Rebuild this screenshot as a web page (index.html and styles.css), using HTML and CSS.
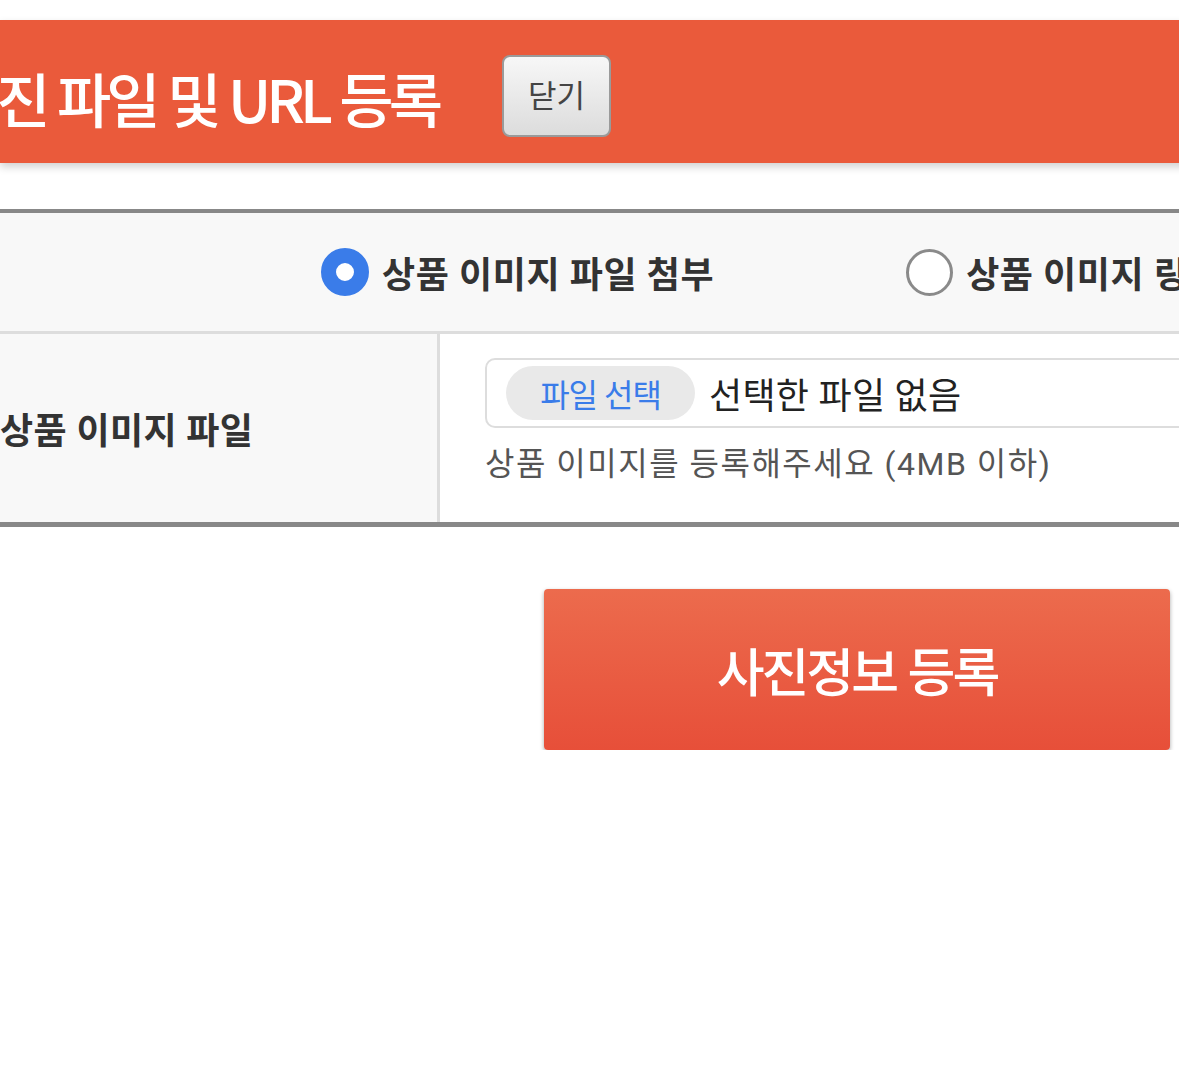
FILE: index.html
```html
<!DOCTYPE html>
<html lang="ko">
<head>
<meta charset="utf-8">
<title>사진 파일 및 URL 등록</title>
<link rel="stylesheet" href="styles.css">
</head>
<body>
<div class="page">
  <header class="topbar">
    <h1 class="title">사진 파일 및 URL 등록</h1>
    <button class="close-btn" type="button">닫기</button>
  </header>
  <section class="form-table">
    <div class="radio-row">
      <label class="radio-opt"><span class="radio checked"></span><span class="radio-text">상품 이미지 파일 첨부</span></label>
      <label class="radio-opt"><span class="radio"></span><span class="radio-text">상품 이미지 링크 등록</span></label>
    </div>
    <div class="file-row">
      <div class="file-label">상품 이미지 파일</div>
      <div class="file-cell">
        <div class="file-box"><span class="file-btn">파일 선택</span><span class="file-name">선택한 파일 없음</span></div>
        <p class="hint">상품 이미지를 등록해주세요 (4MB 이하)</p>
      </div>
    </div>
  </section>
  <div class="actions"><button class="submit" type="button">사진정보 등록</button></div>
</div>
</body>
</html>
```

FILE: styles.css
```css
html, body {
  margin: 0;
  padding: 0;
  background: #ffffff;
  overflow: hidden;
}
body {
  font-family: Roboto, "Noto Sans CJK KR", sans-serif;
  color: #333;
}
.page {
  width: 1400px;
}
.topbar {
  margin-top: 20px;
  height: 143px;
  background: #ea5a3b;
  display: flex;
  align-items: flex-start;
  box-shadow: 0 4px 8px rgba(0, 0, 0, 0.18);
}
.title {
  margin: 40px 0 0 -53px;
  font-family: "Noto Sans CJK KR", sans-serif;
  font-size: 59px;
  line-height: 1.3;
  font-weight: 500;
  color: #ffffff;
  letter-spacing: -5px;
  white-space: nowrap;
}
.close-btn {
  margin: 35px 0 0 64px;
  width: 109px;
  height: 82px;
  font-family: "Noto Sans CJK KR", sans-serif;
  font-size: 31px;
  color: #444;
  background: linear-gradient(#f7f7f7, #dcdcdc);
  border: 2px solid #9a9a9a;
  border-radius: 8px;
  padding: 0 0 6px;
}
.form-table {
  margin-top: 46px;
  border-top: 4px solid #888888;
  border-bottom: 5px solid #888888;
}
.radio-row {
  height: 118px;
  background: #f8f8f8;
  border-bottom: 3px solid #dddddd;
  display: flex;
  align-items: center;
  padding-left: 321px;
  gap: 192px;
}
.radio-opt {
  display: flex;
  align-items: center;
  gap: 13px;
  white-space: nowrap;
}
.radio {
  width: 41px;
  height: 41px;
  border-radius: 50%;
  border: 3px solid #8a8a8a;
  background: #ffffff;
}
.radio.checked {
  width: 18px;
  height: 18px;
  border: 15px solid #3a7ce9;
}
.radio-text {
  font-size: 36px;
  font-weight: 700;
  color: #333;
  letter-spacing: 0.6px;
}
.file-row {
  display: flex;
  height: 188px;
}
.file-label {
  width: 437px;
  flex: none;
  background: #f8f8f8;
  border-right: 3px solid #dddddd;
  display: flex;
  align-items: center;
  font-size: 36px;
  font-weight: 700;
  color: #333;
  letter-spacing: 0.4px;
  white-space: nowrap;
}
.file-cell {
  flex: 1;
  padding: 24px 0 0 45px;
  background: #ffffff;
}
.file-box {
  display: flex;
  align-items: center;
  height: 66px;
  width: 900px;
  border: 2px solid #dddddd;
  border-radius: 10px;
  padding-left: 19px;
}
.file-btn {
  width: 189px;
  height: 54px;
  border-radius: 27px;
  background: #e9e9e9;
  color: #3a7ce9;
  font-size: 32px;
  display: flex;
  align-items: center;
  justify-content: center;
  letter-spacing: -1px;
}
.file-name {
  margin-left: 14px;
  font-size: 36px;
  color: #222;
  letter-spacing: 0.3px;
  white-space: nowrap;
}
.hint {
  margin: 10px 0 0;
  font-size: 32px;
  color: #555;
  letter-spacing: 1.5px;
  white-space: nowrap;
}
.actions {
  margin-top: 62px;
  padding-left: 544px;
}
.submit {
  width: 626px;
  height: 161px;
  border: none;
  border-radius: 4px;
  background: linear-gradient(#ec6b4d, #e74f39);
  box-shadow: 0 2px 4px rgba(0, 0, 0, 0.35);
  color: #ffffff;
  font-family: "Noto Sans CJK KR", sans-serif;
  font-size: 52px;
  font-weight: 500;
  letter-spacing: -3px;
  padding: 0;
}
```
